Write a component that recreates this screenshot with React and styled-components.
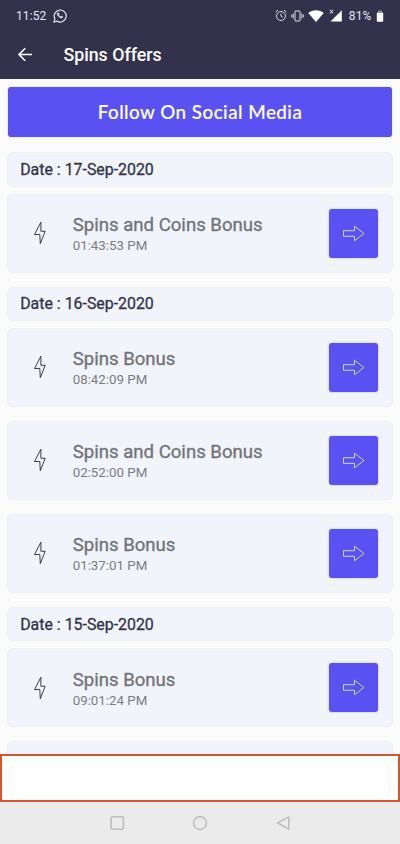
import React from "react"
import styled, { createGlobalStyle } from "styled-components"

const groups = [
    {
        date: "17-Sep-2020",
        offers: [{ title: "Spins and Coins Bonus", time: "01:43:53 PM" }]
    },
    {
        date: "16-Sep-2020",
        offers: [
            { title: "Spins Bonus", time: "08:42:09 PM" },
            { title: "Spins and Coins Bonus", time: "02:52:00 PM" },
            { title: "Spins Bonus", time: "01:37:01 PM" }
        ]
    },
    {
        date: "15-Sep-2020",
        offers: [{ title: "Spins Bonus", time: "09:01:24 PM" }]
    }
]

//-----------------------------------------------ICONS-----------------------------------------------//

const WhatsappIcon = () => (
    <svg width="14" height="14" viewBox="0 0 14 14" fill="none" stroke="#e6e6f0">
        <path d="M1 13l.9-3.2A6 6 0 1 1 4.200 12.200z" strokeWidth="1.200" />
        <path d="M4.600 3.900c-.8.800-.4 2.200 1 3.600s2.900 2 3.900 1.100l.2-.8-1.500-.8-.7.700c-.9-.3-1.600-1-1.900-1.800l.6-.7-.7-1.500z" fill="#e6e6f0" strokeWidth=".5" />
    </svg>
)

const AlarmIcon = () => (
    <svg width="12" height="13" viewBox="0 0 12 13" fill="none" stroke="#dcdce8">
        <circle cx="6" cy="7" r="4.500" />
        <path d="M6 4.500V7l1.800 1.200M.6 3.100L3 1.100M11.400 3.100L9 1.100" />
    </svg>
)

const VibrateIcon = () => (
    <svg width="13" height="12" viewBox="0 0 13 12" fill="none" stroke="#dcdce8">
        <rect x="4" y="1" width="5" height="10" rx=".3" />
        <path d="M2.200 3.500v5M.6 4.800v2.400M10.800 3.500v5M12.400 4.800v2.400" />
    </svg>
)

const WifiIcon = () => (
    <svg width="16" height="12" viewBox="0 0 16 12" fill="#fff">
        <path d="M8 12L.3 2.900C4.500-.6 11.500-.6 15.700 2.900z" />
    </svg>
)

const SignalIcon = () => (
    <svg width="13" height="13" viewBox="0 0 13 13" fill="#fff">
        <path d="M12.800 1.200V12.500H1.500z" />
        <path d="M1 .8l3 3.600M4 .8l-3 3.600" stroke="#fff" strokeWidth="1" />
    </svg>
)

const BatteryIcon = () => (
    <svg width="8" height="12" viewBox="0 0 8 12">
        <path d="M2 .5h4V2h1v2H1V2h1z" fill="#8c8b9f" />
        <rect x=".8" y="3" width="6.400" height="8.700" rx=".6" fill="#fff" />
    </svg>
)

const BackIcon = () => (
    <svg width="16" height="16" viewBox="0 0 16 16" fill="none" stroke="#fff" strokeWidth="1.600">
        <path d="M15 7.500H2M8.200 1.300L2 7.500l6.200 6.200" />
    </svg>
)

const BoltIcon = () => (
    <svg width="14" height="24" viewBox="0 0 14 24" fill="none" stroke="#33343b" strokeWidth=".95" strokeLinejoin="round">
        <path d="M7.900 1.200L1.500 13.600l5.300-.2.500 9.300 4.900-12.500-4.300.1z" />
    </svg>
)

const ArrowIcon = () => (
    <svg width="23" height="17" viewBox="0 0 23 17" fill="none" stroke="#dedcff" strokeWidth=".95">
        <path d="M1.500 5.700h11V1.200l9.400 7.300-9.400 7.300v-4.500h-11z" />
    </svg>
)

//-----------------------------------------------PARTS-----------------------------------------------//

const Offer = ({ title, time }) => (
    <Card>
        <BoltIcon />
        <Info>
            <Title>{title}</Title>
            <Time>{time}</Time>
        </Info>
        <OpenButton aria-label="open"><ArrowIcon /></OpenButton>
    </Card>
)

const App = () => (
    <>
        <GlobalStyle />
        <Screen>
            <Header>
                <StatusBar>
                    <StatusText>11:52</StatusText>
                    <WhatsappIcon />
                    <StatusIcons>
                        <AlarmIcon />
                        <VibrateIcon />
                        <WifiIcon />
                        <SignalIcon />
                        <StatusText $battery>81%</StatusText>
                        <BatteryIcon />
                    </StatusIcons>
                </StatusBar>
                <TitleBar>
                    <BackIcon />
                    <PageTitle>Spins Offers</PageTitle>
                </TitleBar>
            </Header>
            <Content>
                <FollowButton>Follow On Social Media</FollowButton>
                {groups.map(group => (
                    <React.Fragment key={group.date}>
                        <DateRow>Date : {group.date}</DateRow>
                        {group.offers.map(offer => <Offer key={offer.time} {...offer} />)}
                    </React.Fragment>
                ))}
                <Card />                                                    {/*next offer, only its top edge shows above the banner */}
            </Content>
            <Banner />
            <NavBar>
                <svg width="16" height="16" viewBox="0 0 16 16"><rect x="2" y="1.800" width="12.400" height="12.400" rx="1.500" /></svg>
                <svg width="16" height="16" viewBox="0 0 16 16"><circle cx="8" cy="8" r="6.400" /></svg>
                <svg width="16" height="16" viewBox="0 0 16 16"><path d="M13.800 1.900v12.200L2.600 8z" /></svg>
            </NavBar>
        </Screen>
    </>
)

export default App

//-----------------------------------------------STYLES-----------------------------------------------//

const GlobalStyle = createGlobalStyle`
    * {
        box-sizing: border-box;
    }
    body {
        margin: 0;
        font-family: Roboto, sans-serif;
    }
    svg {
        display: block;
        flex-shrink: 0;
    }
`
const Screen = styled.div`
    width: 400px;
    height: 844px;
    display: flex;
    flex-direction: column;
    overflow: hidden;
    background: #fbfbfc;
`
const Header = styled.header`
    height: 78.6px;
    flex-shrink: 0;
    background: #33324d;
    color: #fff;
`
const StatusBar = styled.div`
    height: 31px;
    padding: 0 16px;
    display: flex;
    align-items: center;
    gap: 6.5px;
`
const StatusText = styled.span`
    margin-left: ${props => props.$battery ? "2.5px" : "0"};
    font-size: 12px;
    letter-spacing: ${props => props.$battery ? "0.2px" : "0.1px"};
    color: #e6e6f0;
`
const StatusIcons = styled.div`
    margin-left: auto;
    display: flex;
    align-items: center;
    gap: 4.4px;
`
const TitleBar = styled.div`
    height: 47px;
    padding-left: 17px;
    display: flex;
    align-items: center;
    gap: 30.4px;
`
const PageTitle = styled.h1`
    margin: 0;
    font-size: 17.8px;
    font-weight: 500;
`
const Content = styled.main`
    flex: 1;
    min-height: 0;
    padding: 8.6px 7.2px 0;
    overflow: hidden;
`
const FollowButton = styled.button`
    display: block;
    width: calc(100% - 2.6px);
    height: 49.4px;
    margin: 0 1.3px 15.6px;
    padding: 0 0 1px;
    border: 0;
    border-radius: 3px;
    background: #5a51f3;
    box-shadow: 0 0 2px rgba(90, 81, 243, 0.3);
    color: #fff;
    font-family: Lato, sans-serif;
    font-size: 18.8px;
    font-weight: 500;
    letter-spacing: 0.48px;
    -webkit-text-stroke: 0.15px #fff;
`
const DateRow = styled.div`
    height: 34.4px;
    margin-bottom: 7px;
    padding: 0 0 0 12px;
    display: flex;
    align-items: center;
    border: 1.5px solid #edf0f4;
    border-radius: 5px;
    background: #f1f4fb;
    color: #33344a;
    font-size: 15.9px;
    -webkit-text-stroke: 0.3px #33344a;
`
const Card = styled.div`
    height: 79px;
    margin-bottom: 14px;
    padding: 0 13.5px 0 24.5px;
    display: flex;
    align-items: center;
    border: 1.5px solid #edf0f4;
    border-radius: 5px;
    background: #f1f4fb;
`
const Info = styled.div`
    flex: 1;
    padding: 4px 0 0 26px;
`
const Title = styled.div`
    color: #737479;
    font-size: 18.6px;
    line-height: 22px;
    -webkit-text-stroke: 0.35px #737479;
`
const Time = styled.div`
    color: #7b7c82;
    font-size: 13.3px;
    line-height: 20px;
`
const OpenButton = styled.button`
    width: 49px;
    height: 49px;
    padding: 0;
    display: flex;
    align-items: center;
    justify-content: center;
    border: 0;
    border-radius: 3px;
    background: #5a51f3;
    box-shadow: 0 0 2px rgba(90, 81, 243, 0.4);
`
const Banner = styled.div`
    height: 48px;
    flex-shrink: 0;
    border: 2px solid #d4552b;
    background: #fff;
`
const NavBar = styled.nav`
    height: 42px;
    flex-shrink: 0;
    display: flex;
    align-items: center;
    justify-content: center;
    gap: 67px;
    background: #ebebeb;

    svg {
        fill: none;
        stroke: #bebebe;
        stroke-width: 1.6;
        stroke-linejoin: round;
    }
`
